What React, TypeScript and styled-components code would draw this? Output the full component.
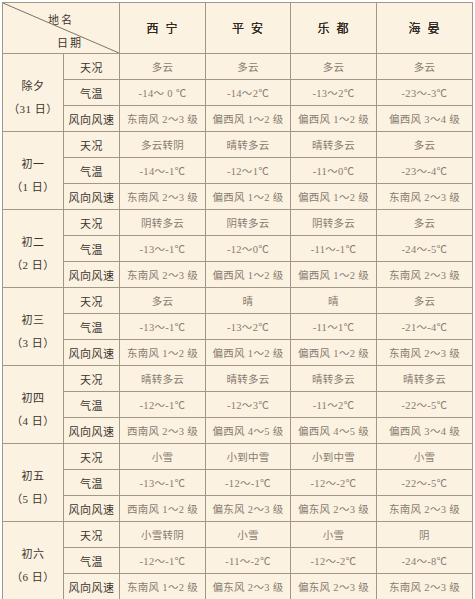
import React from "react";
import styled, { createGlobalStyle } from "styled-components";

const GlobalStyle = createGlobalStyle`
    html, body {
        margin: 0;
        padding: 0;
        background: #ffffff;
    }
    body {
        font-family: "Liberation Serif", "Noto Sans CJK SC", serif;
    }
`;

const Page = styled.div`
    padding: 2px 3px 2px 2px;
`;

const Table = styled.table`
    width: 470px;
    border-collapse: collapse;
    table-layout: fixed;
    background: #fcf2e2;
    border: 1px solid #8f8578;
`;

const Cell = styled.td<{ $tone?: "label" | "data" }>`
    border: 1px solid #a39888;
    height: 25px;
    padding: 0;
    text-align: center;
    vertical-align: middle;
    font-size: ${(p) => (p.$tone === "data" ? "10.5px" : "11px")};
    letter-spacing: ${(p) => (p.$tone === "data" ? "0.3px" : "0.5px")};
    white-space: nowrap;
    color: ${(p) => (p.$tone === "data" ? "#877c70" : "#3b342d")};
`;

const HeadCell = styled.th`
    border: 1px solid #a39888;
    height: 50px;
    padding: 0 0 0 6px;
    font-size: 12px;
    font-weight: normal;
    letter-spacing: 7px;
    color: #2e2822;
    text-shadow: 0 0 0.5px #2e2822;
`;

const CornerCell = styled.th`
    position: relative;
    border: 1px solid #a39888;
    height: 50px;
    padding: 0;
    font-weight: normal;
`;

const Diagonal = styled.svg`
    position: absolute;
    inset: 0;
    width: 100%;
    height: 100%;
`;

const CornerLabels = styled.div`
    display: flex;
    flex-direction: column;
    justify-content: space-between;
    height: 100%;
    box-sizing: border-box;
    padding: 8px 0 3px;
    font-size: 11px;
    letter-spacing: 2px;
    color: #3b342d;
`;

const CornerText = styled.span<{ $shift: number }>`
    padding-left: ${(p) => p.$shift}px;
`;

const DateLines = styled.div`
    display: flex;
    flex-direction: column;
    align-items: center;
    gap: 7px;
    padding-top: 8px;
`;

const cities = ["西宁", "平安", "乐都", "海晏"];

type Day = {
    name: string;
    date: string;
    sky: string[];
    temp: string[];
    wind: string[];
};

const days: Day[] = [
    {
        name: "除夕",
        date: "（31 日）",
        sky: ["多云", "多云", "多云", "多云"],
        temp: ["-14～ 0 ℃", "-14～2℃", "-13～2℃", "-23～-3℃"],
        wind: ["东南风 2～3 级", "偏西风 1～2 级", "偏西风 1～2 级", "偏西风 3～4 级"],
    },
    {
        name: "初一",
        date: "（1 日）",
        sky: ["多云转阴", "晴转多云", "晴转多云", "多云"],
        temp: ["-14～-1℃", "-12～1℃", "-11～0℃", "-23～-4℃"],
        wind: ["东南风 2～3 级", "偏西风 1～2 级", "偏西风 1～2 级", "东南风 2～3 级"],
    },
    {
        name: "初二",
        date: "（2 日）",
        sky: ["阴转多云", "阴转多云", "阴转多云", "多云"],
        temp: ["-13～-1℃", "-12～0℃", "-11～-1℃", "-24～-5℃"],
        wind: ["东南风 2～3 级", "偏西风 1～2 级", "偏西风 1～2 级", "东南风 2～3 级"],
    },
    {
        name: "初三",
        date: "（3 日）",
        sky: ["多云", "晴", "晴", "多云"],
        temp: ["-13～-1℃", "-13～2℃", "-11～1℃", "-21～-4℃"],
        wind: ["东南风 1～2 级", "偏西风 1～2 级", "偏西风 1～2 级", "东南风 2～3 级"],
    },
    {
        name: "初四",
        date: "（4 日）",
        sky: ["晴转多云", "晴转多云", "晴转多云", "晴转多云"],
        temp: ["-12～-1℃", "-12～3℃", "-11～2℃", "-22～-5℃"],
        wind: ["西南风 2～3 级", "偏西风 4～5 级", "偏西风 4～5 级", "偏西风 3～4 级"],
    },
    {
        name: "初五",
        date: "（5 日）",
        sky: ["小雪", "小到中雪", "小到中雪", "小雪"],
        temp: ["-13～-1℃", "-12～-1℃", "-12～-2℃", "-22～-5℃"],
        wind: ["西南风 1～2 级", "偏东风 2～3 级", "偏东风 2～3 级", "东南风 2～3 级"],
    },
    {
        name: "初六",
        date: "（6 日）",
        sky: ["小雪转阴", "小雪", "小雪", "阴"],
        temp: ["-12～-1℃", "-11～-2℃", "-12～-2℃", "-24～-8℃"],
        wind: ["东南风 1～2 级", "偏东风 2～3 级", "偏东风 2～3 级", "东南风 2～3 级"],
    },
];

const rowsOf = (d: Day) => [
    { label: "天况", values: d.sky },
    { label: "气温", values: d.temp },
    { label: "风向风速", values: d.wind },
];

const App: React.FC = () => {
    return (
        <Page>
            <GlobalStyle />
            <Table>
                <colgroup>
                    <col style={{ width: 61 }} />
                    <col style={{ width: 56 }} />
                    <col style={{ width: 86 }} />
                    <col style={{ width: 85 }} />
                    <col style={{ width: 86 }} />
                    <col style={{ width: 96 }} />
                </colgroup>
                <thead>
                    <tr>
                        <CornerCell colSpan={2}>
                            <Diagonal viewBox="0 0 100 100" preserveAspectRatio="none">
                                <line x1="0" y1="0" x2="100" y2="100" stroke="#7d7366" strokeWidth="1" vectorEffect="non-scaling-stroke" />
                            </Diagonal>
                            <CornerLabels>
                                <CornerText $shift={0}>地名</CornerText>
                                <CornerText $shift={18}>日期</CornerText>
                            </CornerLabels>
                        </CornerCell>
                        {cities.map((c) => (
                            <HeadCell key={c}>{c}</HeadCell>
                        ))}
                    </tr>
                </thead>
                <tbody>
                    {days.map((d) =>
                        rowsOf(d).map((r, i) => (
                            <tr key={d.name + r.label}>
                                {i === 0 && (
                                    <Cell rowSpan={3} $tone="label">
                                        <DateLines>
                                            <span>{d.name}</span>
                                            <span>{d.date}</span>
                                        </DateLines>
                                    </Cell>
                                )}
                                <Cell $tone="label">{r.label}</Cell>
                                {r.values.map((v, j) => (
                                    <Cell key={j} $tone="data">
                                        {v}
                                    </Cell>
                                ))}
                            </tr>
                        ))
                    )}
                </tbody>
            </Table>
        </Page>
    );
};

export default App;
